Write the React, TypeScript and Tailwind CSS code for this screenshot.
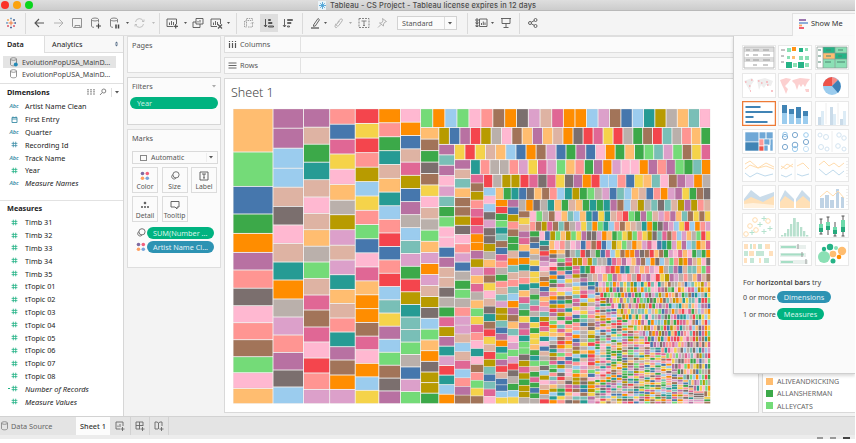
import React from "react";

const PALETTE: Record<string, string> = {
  b: "#4677ad", c: "#9bccee", o: "#ff8d00", l: "#ffbd70", g: "#3ca949",
  h: "#74db78", m: "#b89b00", y: "#f5d34a", t: "#269b94", u: "#79bfb7",
  r: "#f4454d", s: "#ff9592", k: "#7b6f6e", a: "#bab0ab", p: "#e06795",
  q: "#ffb8d1", v: "#b871a2", w: "#dca0ca", n: "#a27459", e: "#deb3a3",
};

type Tile = { x: number; y: number; w: number; h: number; f: string };
const RIGHT = 710.5;
const BOTTOM = 404;

let seed = 17;
function randomCodes(n: number) {
  const keys = Object.keys(PALETTE);
  let s = "";
  for (let i = 0; i < n; i++) {
    seed = (seed * 1103515245 + 12345) % 2147483648;
    s += keys[Math.floor((seed / 2147483648) * keys.length)];
  }
  return s;
}

// Splits a span into n slices that shrink slightly towards its end.
function cuts(a: number, b: number, n: number) {
  const out: number[] = [];
  for (let i = 0; i <= n; i++) {
    const t = i / n;
    out.push(a + (b - a) * (t + 0.05 * t * (1 - t)));
  }
  return out;
}

function column(x0: number, x1: number, y0: number, codes: string, tops?: number[]): Tile[] {
  const c = tops ?? cuts(y0, BOTTOM, codes.length);
  return codes.split("").map((k, i) => ({ x: x0, y: c[i], w: x1 - x0, h: c[i + 1] - c[i], f: PALETTE[k] }));
}
function row(y0: number, y1: number, x0: number, codes: string): Tile[] {
  const c = cuts(x0, RIGHT, codes.length);
  return codes.split("").map((k, i) => ({ x: c[i], y: y0, w: c[i + 1] - c[i], h: y1 - y0, f: PALETTE[k] }));
}

const FINE_COLUMNS: [number, number, number, number][] = [
  [565, 572.3, 258, 4.1], [572.3, 580, 266, 4], [580, 587.7, 274, 3.9], [587.7, 595, 282, 3.9],
  [595, 600, 292.7, 2.8], [600, 606, 298, 2.8], [606, 611, 303.5, 2.8], [611, 616.7, 309, 2.7],
  [616.7, 622, 314.5, 2.7], [622, 627.7, 320, 2.6], [627.7, 633.7, 325.5, 2.6], [633.7, 639, 331, 2.6],
  [639, 644.3, 336.5, 2.6], [644.3, 650, 342, 2.5], [650, 655, 347.7, 2.5], [655, 661, 347.7, 2.5],
  [661, 666, 353.3, 2.5], [666, 671.7, 358.7, 2.4], [671.7, 677.3, 369.3, 2.4], [677.3, 683, 374.7, 2.4],
  [683, 688.3, 380, 2.4], [688.3, 693.5, 385.7, 2.3], [693.5, 704, 391.3, 2.3], [704, RIGHT, 397, 2.3],
];
const FINE_ROWS: [number, number, number, number][] = [
  [250, 258, 565, 4.9], [258, 266, 572.3, 4.8], [266, 274, 580, 4.8], [274, 282, 587.7, 4.7],
  [282, 287.3, 595, 3.4], [287.3, 292.7, 595, 3.4], [292.7, 298, 600, 3.4], [298, 303.5, 606, 3.3],
  [303.5, 309, 611, 3.3], [309, 314.5, 616.7, 3.3], [314.5, 320, 622, 3.2], [320, 325.5, 627.7, 3.2],
  [325.5, 331, 633.7, 3.2], [331, 336.5, 639, 3.1], [336.5, 342, 644.3, 3.1], [342, 347.7, 650, 3.1],
  [347.7, 353.3, 661, 3.1], [353.3, 358.7, 666, 3], [358.7, 364, 671.7, 3], [364, 369.3, 671.7, 3],
  [369.3, 374.7, 677.3, 3], [374.7, 380, 683, 3], [380, 385.7, 688.3, 2.9], [385.7, 391.3, 693.5, 2.9],
  [391.3, 397, 704, 2.8],
];

const TILES: Tile[] = [
  ...column(233, 273, 109, "lhbgovskqsnhql", [109, 152.3, 186.7, 214.3, 233.7, 252.7, 270.3, 288.5, 306, 323, 340, 357, 373, 388.7, 404]),
  ...column(273, 303.5, 109, "vvccekqetoawsvkc", [109, 128.5, 148.5, 168.5, 187.5, 206.7, 225.3, 243.7, 262.3, 280.3, 299.3, 317.3, 335.3, 352.7, 370.3, 387.3, 404]),
  ...column(303.5, 329.7, 109, "vegteqelahepnpqrsw", [109, 127.5, 144.5, 162.5, 180, 197.3, 213.7, 230, 246.5, 262.3, 278.7, 295.3, 310.3, 327.3, 342.3, 358.3, 373.3, 389.7, 404]),
  ...column(329.7, 355.2, 109, "sbpyqlamwewtlestvnow", [109, 124.5, 139.5, 154.3, 169.5, 184.7, 200.5, 215, 230, 245.5, 260.3, 275, 289.7, 303.7, 318.3, 332.3, 347, 360.3, 375.3, 389.7, 404]),
  ...column(355.2, 378.8, 109, "ryrsmcyshbqploonpqocy"),
  ...column(378.8, 400.5, 109, "osgteltcsrbsrcuyvchnkv"),
  ...column(400.5, 420.6, 109, "qobepmbvacuwgrmtuuhabwh"),
  ...row(109, 127.8, 420.6, "hochqsnokwepoocwnbctmaluq"),
  ...column(420.6, 438.8, 127.8, "lngknyqeahlwowemkchlokmmg"),
  ...row(127.8, 144.7, 438.8, "mbvrmaqnlvleokrpyragnruaslg"),
  ...column(438.8, 454.6, 144.7, "vuvqwughqqbveekagpmvtwrtco"),
  ...row(144.7, 160, 454.6, "yryelcbonwbgvbqoglghuwhnyp"),
  ...column(454.6, 470.6, 160, "veulnnmkqswbaghaswwecepcsvn"),
  ...row(160, 174.7, 470.6, "tsaaswypwhlsgvowqqovsvhguo"),
  ...column(470.6, 483.6, 174.7, "pnmsprpoovmwlpalhypsqtqnshyn"),
  ...row(174.7, 188, 483.6, "rammrpkpykvorccsbyluqnvwoa"),
  ...column(483.6, 495.6, 188, "cqckwkkmalpnyqektnryermubupq"),
  ...row(188, 200, 495.6, "lgtbklnsctmghawbuclebsowvygnk"),
  ...column(495.6, 507.6, 200, "orghtunbpsagseuwmmubvothvrebbcy"),
  ...column(507.6, 518.7, 200, "vbmsnggeouesucovnluqwhwrkagcy"),
  ...row(200, 211.3, 518.7, "aokatlgelgtgtvncemaukuemvmse"),
  ...column(518.7, 529.8, 211.3, "nyevplbotestlpugyvpthhkmpmgmma"),
  ...row(211.3, 221.7, 529.8, "qhanqlucltbytesrhgvhewsvlunyny"),
  ...row(221.7, 231.3, 529.8, "snmpnunawyuohtcsnleatogkvwcyrcosw"),
  ...column(529.8, 539.5, 231.3, "gkblaybyytagupatygyylgthegpgbga"),
  ...row(231.3, 240.8, 539.5, "qbmhlmhyvkkwolghymhsymkupnscwlahry"),
  ...column(539.5, 549.2, 240.8, "tkrvwqenobvlswumrpytqbeahkcmqeoar"),
  ...row(240.8, 250, 549.2, "lqsaqwbsnrbcmyhaolwpqbtgwyvcuolp"),
  ...column(549.2, 557, 250, "okvqrbogkysobmrvehoylcaktmnphgsuwlmcto"),
  ...column(557, 565, 250, "lahkgsbcpqyktovmgquplnrowhsbmckreagtys"),
  ...FINE_COLUMNS.flatMap(([x0, x1, y, s]) => column(x0, x1, y, randomCodes(Math.max(1, Math.round((BOTTOM - y) / s))))),
  ...FINE_ROWS.flatMap(([y0, y1, x, s]) => row(y0, y1, x, randomCodes(Math.max(1, Math.round((RIGHT - x) / s))))),
];

function Treemap() {
  return (
    <svg className="mt-[5px] ml-[7px] block" width="480" height="297" viewBox="232 108.3 480 297">
      {TILES.map((t, i) => {
        const gap = t.w < 9 || t.h < 9 ? 0.6 : 0.9;
        return <rect key={i} x={t.x + gap / 2} y={t.y + gap / 2} width={t.w - gap} height={t.h - gap} fill={t.f} stroke="#776655" strokeOpacity="0.12" strokeWidth="0.5" />;
      })}
    </svg>
  );
}

type IconProps = { children: React.ReactNode; w?: number; h?: number; c?: string };
function Icon({ children, w = 12, h = 12, c = "#555" }: IconProps) {
  return (
    <svg width={w} height={h} viewBox={`0 0 ${w} ${h}`} fill="none" stroke={c} strokeWidth="0.9" className="shrink-0">
      {children}
    </svg>
  );
}
const Caret = ({ c = "#555" }: { c?: string }) => (
  <svg width="4" height="3" viewBox="0 0 4 3" className="shrink-0"><path d="M0 0h4L2 2.6z" fill={c} /></svg>
);
const Dot = ({ c = "#555" }: { c?: string }) => (
  <svg width="3" height="2" viewBox="0 0 3 2" className="shrink-0"><path d="M0 0h3L1.5 2z" fill={c} /></svg>
);
const Cylinder = ({ badge, c = "#888" }: { badge?: boolean; c?: string }) => (
  <Icon w={10} h={10} c={c}>
    <ellipse cx="4.5" cy="2" rx="3" ry="1.3" />
    <path d="M1.500 2v5.500c0 .8 1.300 1.300 3 1.300s3-.5 3-1.300V2" />
    {badge && <circle cx="6.800" cy="7.500" r="2" fill="#2489b5" stroke="none" />}
  </Icon>
);
const Bubble = () => (
  <Icon w={10} h={10} c="#666">
    <circle cx="6" cy="3.8" r="3.1" />
    <path d="M3 3.5a2.4 2.4 0 1 0 3 3.6" />
  </Icon>
);
const FourDots = () => (
  <Icon w={10} h={10}>
    <g stroke="none">
      <circle cx="2.500" cy="2.500" r="1.800" fill="#7f6aa0" /><circle cx="7.300" cy="2.500" r="1.800" fill="#f2607d" />
      <circle cx="2.500" cy="7.300" r="1.800" fill="#ffa061" /><circle cx="7.300" cy="7.300" r="1.800" fill="#7aa5da" />
    </g>
  </Icon>
);

function TitleBar() {
  return (
    <header className="flex h-[11px] items-center border-b border-[#b9b9b9] bg-gradient-to-b from-[#dedede] to-[#cccccc]">
      <div className="flex w-[317px] gap-[5px] pl-px">
        <i className="size-[8px] -mr-px rounded-full bg-[#fb3027]" />
        <i className="size-[8px] -mr-px rounded-full bg-[#fba30d]" />
        <i className="size-[8px] rounded-full bg-[#09d51c]" />
      </div>
      <div className="mr-[4px] ml-[1px] flex h-[9px] w-[8px] items-center justify-center bg-[#eaf3f8]">
        <svg width="7" height="7" viewBox="0 0 7 7" stroke="#4da3d6" strokeWidth=".9"><path d="M3.5 0v7M0 3.5h7M1.2 1.2l4.600 4.600M5.800 1.200L1.200 5.800" /></svg>
      </div>
      <span className="font-['Inter',sans-serif] text-[7.450px] leading-[9px] font-medium tracking-[0.1px] text-[#4b4b4b]">Tableau - CS Project - Tableau license expires in 12 days</span>
    </header>
  );
}

function Sep() {
  return <i className="h-[21px] w-px shrink-0 bg-[#dadada]" />;
}

function Toolbar() {
  return (
    <div className="flex h-[25px] items-center border-b border-[#dedede] bg-[#f4f4f4] pl-[5px]">
      <Icon>
        <path d="M6 3.5v5M3.5 6h5" stroke="#ed7133" />
        <path d="M6 .5v2M5 1.5h2M1 5.9h2M2 5v2" stroke="#6e9bc3" />
        <path d="M3 2v2M2 3h2" stroke="#f1a14e" />
        <path d="M9 2v2M8 3h2" stroke="#385b8d" />
        <path d="M3 8v2M2 9h2M9 8v2M8 9h2" stroke="#d84c5d" />
        <path d="M11 6H9.3M10.2 5v2M6 9.5v2M5 10.5h2" stroke="#45619b" />
      </Icon>
      <div className="flex w-[9px] justify-end"><Sep /></div>
      <div className="flex w-[133px] items-center pl-[8px]">
        <Icon w={11}><path d="M10 6H1M5 2L1 6l4 4" strokeWidth="1.100" /></Icon>
        <span className="w-[8px]" />
        <Icon w={11} c="#aaa"><path d="M1 6h9M6 2l4 4-4 4" /></Icon>
        <span className="w-[7px]" />
        <Icon c="#888"><path d="M1.5 1.5h9v9h-8l-1-1zM4 10.5V8.5h5v2" /></Icon>
        <span className="w-[7px]" />
        <Icon c="#777"><ellipse cx="5" cy="2.5" rx="3.5" ry="1.5" /><path d="M1.500 2.500v6.500c0 .8 1 1.300 2.500 1.300M8.500 2.500v3" /><path d="M8.500 6.500v5M6 9h5" strokeWidth="1.200" stroke="#444" /></Icon>
        <span className="w-[7px]" />
        <Icon c="#777"><ellipse cx="5" cy="2.500" rx="3.500" ry="1.500" /><path d="M1.500 2.500v6.500c0 .8 1 1.300 2.500 1.300M8.500 2.500v3" /><path d="M7 7.500v4M9.500 7.500v4" strokeWidth="1.500" stroke="#444" /></Icon>
        <span className="w-[5px]" /><Dot /><span className="w-[5px]" />
        <Icon w={11} c="#bbb"><path d="M1.500 5a4 4 0 0 1 7.800-.5M9.500 7a4 4 0 0 1-7.800.5M8 4.500h2V2.500M3 7.500H1v2" /></Icon>
        <span className="w-[7px]" /><Dot c="#bbb" />
      </div>
      <Sep />
      <div className="flex w-[76px] items-center pl-[6px]">
        <Icon w={13}><path d="M1 2h9.500v5M1 2v7.500h6M3.500 8V5.500M5.500 8V4M7.500 8V5" /><path d="M9.700 7v4.500M7.500 9.300h4.500" strokeWidth="1.200" /></Icon>
        <span className="w-[5px]" /><Dot /><span className="w-[5px]" />
        <Icon><path d="M4 1.500h7v5.500H4zM4 5H1v5.500h7V7M6 5.500V4M8 5.500V3" /></Icon>
        <span className="w-[6px]" />
        <Icon w={13}><path d="M1 2h9.500v5M1 2v7.500h6M3.500 8V5.500M5.500 8V4M7.500 8V5" /><path d="M8 7.500l4 4M12 7.500l-4 4" strokeWidth="1.200" /></Icon>
        <span className="w-[4px]" /><Dot />
      </div>
      <Sep />
      <div className="flex w-[65px] shrink-0 items-center pl-[6px]">
        <Icon c="#999"><path d="M3.500 1.500h6v2h-6zM1.500 4v6h2V4zM5 10h4.500V5M8 6.500L9.500 5 11 6.500" strokeDasharray="1.500 .8" /></Icon>
        <div className="ml-[5px] flex h-[18px] w-[18px] items-center justify-center bg-[#dedede]"><Icon c="#444"><path d="M2.500 2v8M1 8l1.500 2L4 8M5.500 2.500h2v1h-2zM5.500 5.500h3.500v1H5.500zM5.500 9h5v1h-5z" /></Icon></div>
        <div className="ml-[4px]"><Icon><path d="M2.500 2v8M1 8l1.500 2L4 8M5.500 2.500h5v1h-5zM5.500 5.500h3.500v1H5.500zM5.500 9h2v1h-2z" /></Icon></div>
      </div>
      <Sep />
      <div className="flex w-[164px] shrink-0 items-center pl-[8px]">
        <Icon w={9}><path d="M2.500 8l4.500-6.500 1.500 1.200L4.300 9l-1.800.3z" /><path d="M0 11h8" strokeWidth="1.300" /></Icon>
        <span className="w-[4px]" /><Dot /><span className="w-[6px]" />
        <Icon w={10} c="#aaa"><path d="M4.500 5.500l2.800-3.300c1-1 2.700.2 1.900 1.600L5.800 8.500c-1.200 1.400-3 .2-2.200-1.100L6.500 4M3 6.500L2 9c-.3 1.700 1.300 2.200 2.200 1" /></Icon>
        <span className="w-[6px]" /><Dot c="#aaa" /><span className="w-[6px]" />
        <Icon c="#777"><path d="M1 1.500h10v9H1z" strokeDasharray="2 1" /><path d="M3.500 4h5M6 4v4.500M5 8.500h2" /></Icon>
        <span className="w-[7px]" />
        <Icon w={10} c="#aaa"><path d="M5.500 1.500l4 3-1.500.5-1.500 2v2L2.500 6h2L6 4zM4 7.500L1 10.500" /></Icon>
        <div className="ml-[10px] flex h-[14px] w-[60px] shrink-0 items-center border border-[#d2d2d2] bg-[#fbfbfb] text-[7.200px] text-[#555]">
          <span className="w-[47px] border-r border-[#ddd] pl-[4px] leading-[12px]">Standard</span>
          <span className="ml-[3px]"><Caret /></span>
        </div>
      </div>
      <Sep />
      <div className="flex w-[51px] shrink-0 items-center pl-[7px]">
        <Icon w={13}><path d="M1 2h2v2H1zM1 5h2v1.500H1zM1 8h2v1.500H1zM4.500 2H12v7.500H4.500zM6.500 8V6M8.300 8V4.500M10 8V5.500" /></Icon>
        <span className="w-[3px]" /><Dot /><span className="w-[6px]" />
        <Icon><path d="M1 1.500h10M2 1.500v5h8v-5M6 6.500v3.500M3.500 10.500h5" /></Icon>
      </div>
      <Sep />
      <div className="ml-[7px]"><Icon><circle cx="3" cy="6" r="1.500" /><circle cx="8.500" cy="3" r="1.500" /><circle cx="8.500" cy="9" r="1.500" /><path d="M4.300 5.200l2.900-1.500M4.300 6.800l2.900 1.500" /></Icon></div>
    </div>
  );
}

function FieldIcon({ kind }: { kind: string }) {
  if (kind === "abc") return <span className="text-[5.500px] font-semibold text-[#3c8da7] italic">Abc</span>;
  if (kind === "date") return <Icon w={7} h={7} c="#3c8da7"><path d="M1 1.500h5v5H1zM1 3h5M2 .5v1M5 .5v1" /></Icon>;
  const c = kind === "#b" ? "#3c8da7" : "#21b184";
  return (
    <span className="flex items-center">
      {kind === "=#" && <i className="-ml-[3px] mr-[1px] h-px w-[2px] bg-[#21b184]" />}
      <Icon w={7} h={7} c={c}><path d="M2.300.7v5.600M4.700.7v5.600M.6 2.400h5.800M.6 4.600h5.800" strokeWidth=".8" /></Icon>
    </span>
  );
}

function Field({ kind, name, italic }: { kind: string; name: string; italic?: boolean }) {
  return (
    <li className="flex h-[12.800px] items-center">
      <span className="flex w-[28px] shrink-0 justify-center leading-[8px]"><FieldIcon kind={kind} /></span>
      <span className={italic ? "-ml-[3px] text-[7.500px] leading-[10px] italic" : "-ml-[3px] text-[7.250px] leading-[10px]"}>{name}</span>
    </li>
  );
}

const DIMENSIONS: [string, string][] = [["abc", "Artist Name Clean"], ["date", "First Entry"], ["abc", "Quarter"], ["#b", "Recording Id"], ["abc", "Track Name"], ["#", "Year"]];
const MEASURES = ["Timb 31", "Timb 32", "Timb 33", "Timb 34", "Timb 35", "tTopic 01", "tTopic 02", "tTopic 03", "tTopic 04", "tTopic 05", "tTopic 06", "tTopic 07", "tTopic 08"];

function DataPane() {
  return (
    <aside className="flex w-[124px] shrink-0 flex-col border-r border-[#d6d6d6] bg-white text-[#222]">
      <div className="flex h-[17px] text-[7.300px] leading-[16px]">
        <div className="w-[44px] pl-[7px] font-semibold">Data</div>
        <div className="flex flex-1 items-center border-b border-l border-[#dedede] bg-[#f8f8f8] pl-[7px]">
          <span className="flex-1">Analytics</span>
          <svg width="5" height="6" viewBox="0 0 5 6" className="mr-[4px]"><path d="M.8 2.500L2.500.5l1.700 2zM.8 3.500l1.700 2 1.700-2z" fill="#59708a" /></svg>
        </div>
      </div>
      <div className="h-[31px] border-b border-[#e0e0e0] pt-[3px] text-[7.100px] leading-[10px] text-[#444]">
        <div className="ml-[3px] flex h-[12px] w-[113px] items-center bg-[#e4e4e4] pl-[6px]"><Cylinder badge /><span className="ml-[3px] whitespace-nowrap">EvolutionPopUSA_MainD...</span></div>
        <div className="ml-[3px] flex h-[12px] w-[113px] items-center pl-[6px]"><Cylinder /><span className="ml-[3px] whitespace-nowrap">EvolutionPopUSA_MainD...</span></div>
      </div>
      <div className="flex h-[16px] items-center pl-[7px] text-[7.300px] font-bold">
        <span className="w-[80px]">Dimensions</span>
        <Icon w={8} h={8} c="#777"><path d="M1 1v6M4 1v6M7 1v6" strokeWidth="1.200" strokeDasharray="1.500 .6" /></Icon>
        <span className="w-[4px]" />
        <Icon w={8} h={8} c="#777"><circle cx="4.800" cy="3" r="2" /><path d="M3.300 4.500L1 7" /></Icon>
        <span className="mx-[4px] h-[9px] w-px bg-[#ddd]" /><span className="ml-[-1px]"><Caret /></span>
      </div>
      <ul className="h-[101px] border-b border-[#e2e2e2]">
        {DIMENSIONS.map(([k, n]) => <Field key={n} kind={k} name={n} />)}
        <Field kind="abc" name="Measure Names" italic />
      </ul>
      <div className="h-[15px] pl-[7px] text-[7.300px] leading-[15px] font-bold">Measures</div>
      <ul>
        {MEASURES.map((n) => <Field key={n} kind="#" name={n} />)}
        <Field kind="=#" name="Number of Records" italic />
        <Field kind="#" name="Measure Values" italic />
      </ul>
    </aside>
  );
}

function MarkButton({ label, children }: { label: string; children: React.ReactNode }) {
  return (
    <div className="flex h-[26px] w-[26px] flex-col items-center justify-between border border-[#dcdcdc] pt-[3px] pb-[1px] text-[6.800px] leading-[8px] text-[#555]">
      {children}
      <span>{label}</span>
    </div>
  );
}

function Cards() {
  return (
    <div className="flex w-[100px] shrink-0 flex-col bg-[#f3f3f3] pr-[3px] pl-[3px] text-[7.300px] text-[#555]">
      <div className="h-[37px] border border-[#dedede] bg-[#fbfbfb] pt-[4px] pl-[4px] leading-[9px]">Pages</div>
      <div className="mt-[4px] h-[48px] border border-[#d6d6d6] bg-[#fbfbfb] pt-[4px] leading-[9px]">
        <div className="flex items-center justify-between pr-[4px] pl-[4px]"><span>Filters</span><Caret c="#aaa" /></div>
        <div className="mt-[6px] ml-[2px] h-[12px] w-[88px] rounded-full bg-[#00b380] pl-[7px] leading-[12px] text-[#c9f1e4]">Year</div>
      </div>
      <div className="mt-[4px] h-[139px] border border-[#dedede] bg-[#fbfbfb] pt-[4px] pl-[4px] leading-[9px]">
        <div>Marks</div>
        <div className="mt-[8px] flex h-[13px] w-[86px] items-center border border-[#dadada] text-[6.900px]">
          <i className="ml-[7px] h-[6px] w-[7px] border border-[#888]" />
          <span className="ml-[4px] w-[56px] border-r border-[#eee]">Automatic</span>
          <span className="ml-[2px]"><Caret /></span>
        </div>
        <div className="mt-[3px] flex gap-[3.500px]">
          <MarkButton label="Color"><FourDots /></MarkButton>
          <MarkButton label="Size"><Bubble /></MarkButton>
          <MarkButton label="Label"><Icon w={10} h={10}><path d="M1 1h8v8H1zM3 3h4M5 3v4M4 7h2" /></Icon></MarkButton>
        </div>
        <div className="mt-[3px] flex gap-[3.500px]">
          <MarkButton label="Detail"><Icon w={10} h={10}><circle cx="5" cy="3" r=".9" fill="#555" /><path d="M1 7h2M4 7h2M7 7h2" strokeWidth="1.500" /></Icon></MarkButton>
          <MarkButton label="Tooltip"><Icon w={10} h={10}><path d="M1 1.500h8v5.500H7v2L5 7H1z" /></Icon></MarkButton>
        </div>
        <div className="mt-[5px] flex items-center pl-[4px]">
          <Bubble />
          <span className="ml-[1px] h-[12px] w-[67px] rounded-full bg-[#00b380] pl-[6px] leading-[12px] whitespace-nowrap text-[#d7f5ec]">SUM(Number ...</span>
        </div>
        <div className="mt-[2px] flex items-center pl-[4px]">
          <FourDots />
          <span className="ml-[1px] h-[12px] w-[67px] rounded-full bg-[#2d93b3] pl-[6px] leading-[12px] whitespace-nowrap text-[#e3f2f7]">Artist Name Cl...</span>
        </div>
      </div>
    </div>
  );
}

function Shelf({ name, vertical }: { name: string; vertical?: boolean }) {
  return (
    <div className="flex h-[17px] w-[520px] items-center border border-[#dedede] bg-[#fbfbfb] pb-px text-[7.300px] text-[#555]">
      <div className="flex h-[16px] w-[76px] items-center border-r border-[#e2e2e2] pl-[3px]">
        <Icon w={9} h={9}>{vertical ? <path d="M1.500 1v1M1.500 3v5M4.500 1v1M4.500 3v5M7.500 1v1M7.500 3v5" strokeWidth="1.200" /> : <path d="M.5 2h8M.5 4.500h8M.5 7h8" />}</Icon>
        <span className="ml-[3px] leading-[10px]">{name}</span>
      </div>
    </div>
  );
}

const LEGEND = [["ALIVEANDKICKING", "#ffbd70"], ["ALLANSHERMAN", "#3ca949"], ["ALLEYCATS", "#74db78"]];

function Worksheet() {
  return (
    <main className="flex min-w-0 flex-1 flex-col bg-[#f3f3f3]">
      <Shelf name="Columns" vertical />
      <div className="mt-[4px]"><Shelf name="Rows" /></div>
      <div className="mt-[4px] flex h-[335px]">
        <section className="w-[535px] shrink-0 border border-[#d9d9d9] bg-white">
          <h1 className="h-[24px] pt-[6px] pl-[6px] text-[12.500px] leading-[16px] font-light text-[#444]">Sheet 1</h1>
          <Treemap />
        </section>
        <section className="ml-[3px] flex flex-1 flex-col justify-end border border-r-0 border-[#d9d9d9] bg-white text-[7.050px] text-[#666]">
          {LEGEND.map(([n, c]) => (
            <div key={n} className="flex h-[12.200px] items-center pl-[3px]">
              <i className="mr-[4px] size-[7px]" style={{ background: c }} />{n}
            </div>
          ))}
        </section>
      </div>
    </main>
  );
}

const THUMBS: React.ReactNode[] = [
  <g><path d="M2 2h30v5H2zM2 12h30v5H2z" fill="#ddd" /><path d="M2 2h30v21H2z" fill="none" stroke="#bbb" /><path d="M4 5h4M11 5h6M21 5h6M4 10h3M11 10h5M21 10h7M4 15h4M11 15h6M21 15h7M11 20h4M21 20h5" stroke="#999" strokeWidth="1.200" /></g>,
  <g><path d="M3 5h4M3 11h3M3 17h3" stroke="#888" /><path d="M9 3h4v4H9zM27 3h3v3h-3zM9 11h3v3H9zM21 11h4v4h-4zM27 11h4v4h-4zM15 18h4v4h-4zM27 18h4v4h-4z" fill="#8be0b5" /><path d="M21 3h4v4h-4zM8 17h6v6H8zM20 17h6v6h-6z" fill="#25b386" /><path d="M14 2h4v4h-4z" fill="#ff9417" /><path d="M14 11h3v3h-3z" fill="#ffbd70" /></g>,
  <g><path d="M8 2h12v6H8zM20 8h12v6H20z" fill="#25b386" /><path d="M20 2h12v6H20zM8 14h24v9H8z" fill="#8be0b5" /><path d="M8 8h12v6H8z" fill="#ffbd70" /><path d="M2 2h30v21H2zM8 2v21M20 2v21M8 8h24M8 14h24" stroke="#8a9a92" strokeWidth=".7" fill="none" /><path d="M3 5h3M3 11h3M3 17h3M11 5h5M23 5h5M11 11h5M23 11h4M10 17h6M22 17h8" stroke="#4d8570" /></g>,
  <g><path d="M2 8l8-3 2 3-3 4-1 6-3-5zM15 7l8-2 8 3-2 5-5-1-2 3-3-3-2 5z" fill="#eee" /><path d="M3 9h1.500M7 13h1.500M9 7h1.500M16 8h1.500M19 10h1.500M25 12h1.500M24 9h2M29 18h2M8 18h1" stroke="#f7b0b5" strokeWidth="1.500" /></g>,
  <g fill="#fcd0d0"><path d="M2 7l6-2 5 1-3 4-3 3 3 3-2 5-2-5-2-4zM15 7l7-2 10 1-3 4-2 4-2-3-2 3-2-3-2 6-2-6-3-3zM27 16h4v3h-3z" /></g>,
  <g><circle cx="17" cy="13" r="9" fill="#9bccee" /><path d="M17 13V4a9 9 0 0 0-9 9z" fill="#ee5349" /><path d="M17 13V4a9 9 0 0 1 6 3z" fill="#f78d88" /><path d="M17 13l6-6a9 9 0 0 1 0 13z" fill="#3d7fb5" /></g>,
  <path d="M3.500 5h15v2h-15zM3.500 10h27v2h-27zM3.500 15h8v2h-8zM3.500 20h22v2h-22z" fill="#4184b5" />,
  <g><path d="M4 8h5v15H4zM11 13h5v10h-5zM18 17h5v6h-5zM25 15h5v8h-5z" fill="#9bccee" /><path d="M4 4h5v8H4zM11 8h5v5h-5zM18 6h5v11h-5zM25 10h5v5h-5z" fill="#4184b5" /></g>,
  <g><path d="M11 2v21M23 2v21" stroke="#eee" /><path d="M3 16h3v9H3zM15 6h3v19h-3zM25 18h3v7h-3z" fill="#cadbe9" /><path d="M6 10h3v15H6zM18 13h3v12h-3zM28 10h3v15h-3z" fill="#ddecf6" /></g>,
  <g stroke="#fff" strokeWidth=".6"><path d="M3 3h14v10H3zM17 3h7v7h-7zM24 3h7v7h-7z" fill="#70a8d6" /><path d="M3 13h14v9H3z" fill="#4184b5" /><path d="M17 10h5v7h-5z" fill="#ff9a98" /><path d="M17 17h5v5h-5z" fill="#ee5349" /><path d="M22 10h6v6h-6zM28 10h3v12h-3zM22 16h4v6h-4z" fill="#70a8d6" /></g>,
  <g fill="none" stroke="#7aa7ce"><circle cx="7" cy="8" r="2.600" /><circle cx="7" cy="5.500" r="2.300" stroke="#9bccee" /><circle cx="7" cy="18" r="2.600" /><circle cx="17" cy="6" r="2.600" /><circle cx="17" cy="16" r="2.800" /><circle cx="17" cy="20" r="2.600" stroke="#9bccee" /><circle cx="28" cy="6" r="2.300" stroke="#9bccee" /><circle cx="28" cy="13" r="2.600" /><circle cx="28" cy="20" r="2.600" stroke="#c5e1f5" /></g>,
  <g fill="none" stroke="#d3e4f1"><path d="M17 2v21" stroke="#eee" /><circle cx="5" cy="6" r="2" /><circle cx="11" cy="8" r="2.500" /><circle cx="6" cy="18" r="2.500" /><circle cx="12" cy="20" r="2" /><circle cx="24" cy="6" r="2.200" /><circle cx="29" cy="9" r="2.200" /><circle cx="23" cy="17" r="2.300" /><circle cx="29" cy="20" r="2" /></g>,
  <g fill="none"><path d="M3 7l5-3 8 7 8-5 8 4M3 12l5-4 8 3 8-2 8 3" stroke="#ffdcae" /><path d="M3 16l5 4 7-4 8 3 8-2" stroke="#bfdaec" /></g>,
  <g fill="none"><path d="M17 2v21" stroke="#eee" /><path d="M3 12l6-5 6 3M19 9l6-3 6 6M3 9l5 3 7-5" stroke="#ffdcae" /><path d="M3 18l5 2 6-3M19 17l5 2 7-2" stroke="#bfdaec" /></g>,
  <g fill="none"><path d="M4 8l5-4 5 5 5-3 5 4 5-4" stroke="#ffdcae" /><path d="M4 12l7 6 7-5 6 5 5-4" stroke="#bfdaec" /><path d="M32 4v17" stroke="#ddd" strokeDasharray="1 2" /></g>,
  <g><path d="M2 14l7-9 9 7 14-5v16H2z" fill="#cadcea" /><path d="M2 16l7-4 12 5 11-6v12H2z" fill="#ffe0b7" /><path d="M2 19l9-1 21 2v3H2z" fill="#fff1de" /></g>,
  <g><path d="M2 15l5-10 9 9v9H2zM18 14l6-9 8 8v10H18z" fill="#cadcea" /><path d="M2 17l5-6 9 6v6H2zM18 17l7-6 7 6v6H18z" fill="#ffe0b7" /></g>,
  <g><path d="M5 13h4v10H5zM10 10h4v13h-4zM15 15h4v8h-4zM21 4h3v19h-3zM26 12h3v11h-3z" fill="#bfd3e5" /><path d="M5 12l7-6 6 5 5-5 6 7" fill="none" stroke="#ffdcae" /><path d="M32 4v17" stroke="#ddd" strokeDasharray="1 2" /></g>,
  <g fill="none"><g stroke="#ffdcae"><circle cx="13" cy="7" r="2.300" /><circle cx="8" cy="13" r="2.300" /><circle cx="14" cy="17" r="2.300" /><circle cx="26" cy="8" r="2.300" /><circle cx="4" cy="21" r="2.300" /></g><path d="M22 3v5M19.500 5.500h5M18 9v5M15.500 11.500h5M10 17v5M7.500 19.500h5M22 16v5M19.500 18.500h5M28 13v5M25.500 15.500h5" stroke="#b5e2ce" /></g>,
  <path d="M3 22h2.300v1.500H3zM6 20h2.300v3.500H6zM9 16h2.300v7.500H9zM12 11h2.300v12.500H12zM15 5h2.800v18.500H15zM18.500 9h2.500v14.500h-2.500zM22 14h2.300v9.500H22zM25 18h2.300v5.500H25zM28 22h2.300v1.500H28z" fill="#b8e0ce" />,
  <g><path d="M6 6v15M13 4v18M20 9v14M28 3v20M4.500 6h3M4.500 21h3M11.500 4h3M18.500 23h3M26.500 3h3M26.500 23h3" stroke="#555" /><path d="M4 11h4v4H4zM11 9h4v4h-4zM18 14h4v3h-4zM26 7h4v7h-4z" fill="#6edaab" /><path d="M4 15h4v4H4zM11 13h4v4h-4zM18 17h4v4h-4zM26 14h4v5h-4z" fill="#25a97c" /></g>,
  <g><path d="M2 3h4v5H2zM11 3h3v5h-3zM23 3h5v5h-5zM7 10h5v5H7zM27 10h4v5h-4zM2 17h3v5H2zM17 17h2v5h-2z" fill="#ffe0bd" /><path d="M8 3h2v5H8zM16 3h4v5h-4zM2 10h4v5H2zM14 10h8v5h-8zM8 17h4v5H8zM22 17h5v5h-5z" fill="#c4e7d7" /></g>,
  <g><path d="M2 4h26v4H2zM2 12h26v4H2zM2 19h28v4H2z" fill="#e9f0ed" /><path d="M3 5h15v2H3zM3 12.500h23v2H3zM3 20h12v2H3z" fill="#a6dec5" /><path d="M20 3v5M24 11v5M28 18v5" stroke="#999" /></g>,
  <g><circle cx="9" cy="16" r="6" fill="#8be0b5" /><circle cx="15" cy="6" r="3.200" fill="#25b386" /><circle cx="9" cy="8" r="2.200" fill="#25b386" /><circle cx="21" cy="7" r="2" fill="#8be0b5" /><circle cx="27" cy="10" r="4.200" fill="#ffbd70" /><circle cx="18" cy="13" r="3.300" fill="#ffbd70" /><circle cx="24" cy="16" r="2.300" fill="#ff8d00" /><circle cx="18" cy="20" r="2.500" fill="#25b386" /></g>,
];

function ShowMe() {
  return (
    <div className="absolute top-[13px] right-0 flex w-[122px] flex-col items-end text-[7.300px] text-[#444]">
      <div className="flex h-[23px] w-[63px] items-center border-t border-l border-[#e1e1e1] bg-[#fafafa] pb-[3px] pl-[6px] text-[#333]">
        <svg width="10" height="10" viewBox="0 0 10 10"><path d="M0 1h7" stroke="#9268a8" strokeWidth="1.800" /><path d="M0 4h9" stroke="#80a6d6" strokeWidth="1.800" /><path d="M0 6.500h3" stroke="#ffa061" strokeWidth="1.800" /><path d="M0 9h5" stroke="#ee5066" strokeWidth="1.800" /></svg>
        <span className="ml-[2px] text-[7.400px] whitespace-nowrap">Show Me</span>
      </div>
      <div className="h-[338px] w-full border-b border-l border-[#cfcfcf] bg-[#fafafa] pt-[9px] pl-[8px] shadow-[0_2px_3px_rgba(0,0,0,0.15)]">
        <div className="grid w-[107px] grid-cols-[34px_34px_34px] gap-x-[2.300px] gap-y-[3px]">
          {THUMBS.map((t, i) => (
            <svg key={i} width="34" height="25" viewBox="0 0 34 25" className="bg-white">
              {t}
              <rect x=".5" y=".5" width="33" height="24" fill="none" stroke={i === 6 ? "#ed7a36" : "#e8e8e8"} strokeWidth={i === 6 ? 1.5 : 1} />
            </svg>
          ))}
        </div>
        <div className="mt-[11px] pl-[1px] leading-[10px]">For <b className="font-semibold">horizontal bars</b> try</div>
        <div className="mt-[4px] flex h-[12px] items-center pl-[1px]"><span className="w-[34px] text-[7.100px] whitespace-nowrap">0 or more</span><span className="h-[12px] w-[54px] rounded-full bg-[#2d93b3] text-center leading-[12px] text-[#e3f2f7]">Dimensions</span></div>
        <div className="mt-[5px] flex h-[12px] items-center pl-[1px]"><span className="w-[34px] text-[7.100px] whitespace-nowrap">1 or more</span><span className="h-[12px] w-[47px] rounded-full bg-[#00b380] text-center leading-[12px] text-[#d7f5ec]">Measures</span></div>
      </div>
    </div>
  );
}

function TabBar() {
  return (
    <footer>
      <div className="flex h-[19px] border-t border-[#d2d2d2] bg-[#e4e4e4] text-[7.300px] leading-[18px] text-[#666]">
        <div className="flex w-[76px] items-center"><Cylinder /><span className="ml-px whitespace-nowrap">Data Source</span></div>
        <div className="w-[34px] bg-[#fcfcfc] text-center font-medium whitespace-nowrap text-[#333]">Sheet 1</div>
        <div className="flex w-[21px] items-center justify-center border-r border-[#d2d2d2]"><Icon w={10} h={10} c="#666"><path d="M1 1h7v4M1 1v7h4M3 6V4.500M5 6V3M7.500 6v4M5.500 8h4" /></Icon></div>
        <div className="flex w-[19px] items-center justify-center border-r border-[#d2d2d2]"><Icon w={10} h={10} c="#666"><path d="M1 1h7v4M1 1v7h4M1 4.500h7M4.500 1v7M7.500 6v4M5.500 8h4" /></Icon></div>
        <div className="flex w-[19px] items-center justify-center border-r border-[#d2d2d2]"><Icon w={10} h={10} c="#666"><path d="M1 1h2l1.500 1L6 1h2v4M1 1v7h3M4.500 2v6M7.500 6v4M5.500 8h4" /></Icon></div>
      </div>
      <div className="flex h-[4px] items-end justify-end gap-[7px] bg-[#ececec] pr-[5px]">
        <i className="h-[2px] w-[6px] bg-[#999]" /><i className="h-[2px] w-[6px] bg-[#999]" /><i className="h-[2px] w-[7px] bg-[#444]" />
      </div>
    </footer>
  );
}

export default function App() {
  return (
    <div className="h-[443px] w-[856px] overflow-hidden bg-white font-['Noto_Sans',sans-serif]">
      <div className="relative flex h-[439px] w-[855px] flex-col overflow-hidden bg-[#f3f3f3]">
        <TitleBar />
        <Toolbar />
        <div className="flex h-[380px]">
          <DataPane />
          <Cards />
          <Worksheet />
        </div>
        <TabBar />
        <ShowMe />
      </div>
    </div>
  );
}
